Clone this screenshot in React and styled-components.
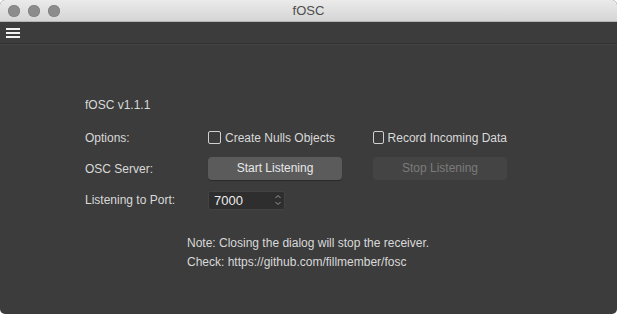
import React from 'react';
import styled, { createGlobalStyle } from 'styled-components';

const GlobalStyle = createGlobalStyle`
  html, body {
    margin: 0;
    padding: 0;
    background: #ffffff;
  }
  body {
    font-family: 'Liberation Sans', Arial, sans-serif;
  }
`;

const Window = styled.div`
  width: 617px;
  height: 314px;
  display: flex;
  flex-direction: column;
  background: #3c3c3c;
  border-radius: 5px;
  overflow: hidden;
`;

const TitleBar = styled.div`
  height: 21px;
  flex: none;
  position: relative;
  display: flex;
  align-items: center;
  justify-content: center;
  background: linear-gradient(#ebebeb, #d5d5d5);
  border-bottom: 1px solid #b4b4b4;
  color: #4d4d4d;
  font-size: 13px;
`;

const Lights = styled.div`
  position: absolute;
  left: 8px;
  top: 5px;
  display: flex;
  gap: 8px;
`;

const Light = styled.span`
  width: 12px;
  height: 12px;
  border-radius: 50%;
  background: #8c8c8c;
  box-shadow: inset 0 0 0 0.5px #7a7a7a;
`;

const Toolbar = styled.div`
  height: 21px;
  flex: none;
  display: flex;
  align-items: center;
  padding-left: 6px;
  border-bottom: 1px solid #313131;
  box-shadow: 0 1px 0 #444;
`;

const Content = styled.div`
  flex: 1;
  padding: 48px 0 0 85px;
  color: #d9d9d9;
  font-size: 12px;
`;

const Form = styled.div`
  display: grid;
  grid-template-columns: 123px 165px 134px;
  grid-auto-rows: 24px;
  row-gap: 8px;
  align-items: center;
`;

const Label = styled.div`
  grid-column: 1;
  padding-top: ${(p) => p.$shift ?? 2}px;
`;

const Check = styled.label`
  display: flex;
  align-items: center;
  gap: 4px;
  white-space: nowrap;
  margin-top: 3px;
`;

const Box = styled.span`
  width: 11px;
  height: 11px;
  border: 1px solid #d0d0d0;
  border-radius: 2px;
`;

const Button = styled.div`
  height: 23px;
  display: flex;
  align-items: center;
  justify-content: center;
  border-radius: 4px;
  background: ${(p) => (p.disabled ? '#444444' : '#5b5b5b')};
  color: ${(p) => (p.disabled ? '#7b7b7b' : '#e8e8e8')};
  box-shadow: ${(p) => (p.disabled ? 'none' : '0 1px 1px rgba(0,0,0,0.3)')};
`;

const Spinner = styled.div`
  width: 77px;
  height: 19px;
  box-sizing: border-box;
  display: flex;
  align-items: center;
  justify-content: space-between;
  padding: 0 2px 0 5px;
  background: #2e2e2e;
  border: 1px solid #434343;
  border-radius: 2px;
  color: #ececec;
  font-size: 13px;
`;

const Notes = styled.div`
  margin: 22px 0 0 102px;
  white-space: nowrap;
  line-height: 19px;
  color: #d9d9d9;
  font-size: 12px;
`;

const Menu = () => (
  <svg width="14" height="10" viewBox="0 0 14 10">
    <rect x="0" y="0" width="14" height="2" fill="#f2f2f2" />
    <rect x="0" y="4" width="14" height="2" fill="#f2f2f2" />
    <rect x="0" y="8" width="14" height="2" fill="#f2f2f2" />
  </svg>
);

const Stepper = () => (
  <svg width="8" height="14" viewBox="0 0 8 14" fill="none" stroke="#9a9a9a" strokeWidth="1">
    <path d="M1.5 5 L4 2.5 L6.5 5" />
    <path d="M1.5 9 L4 11.5 L6.5 9" />
  </svg>
);

export default function App() {
  return (
    <>
      <GlobalStyle />
      <Window>
        <TitleBar>
          <Lights>
            <Light />
            <Light />
            <Light />
          </Lights>
          fOSC
        </TitleBar>
        <Toolbar>
          <Menu />
        </Toolbar>
        <Content>
          <Form>
            <Label>fOSC v1.1.1</Label>
            <div />
            <div />
            <Label $shift={3}>Options:</Label>
            <Check>
              <Box />
              Create Nulls Objects
            </Check>
            <Check>
              <Box />
              Record Incoming Data
            </Check>
            <Label $shift={1}>OSC Server:</Label>
            <Button style={{ width: 134 }}>Start Listening</Button>
            <Button disabled>Stop Listening</Button>
            <Label $shift={0}>Listening to Port:</Label>
            <Spinner>
              7000
              <Stepper />
            </Spinner>
          </Form>
          <Notes>
            Note: Closing the dialog will stop the receiver.
            <br />
            Check: https://github.com/fillmember/fosc
          </Notes>
        </Content>
      </Window>
    </>
  );
}
